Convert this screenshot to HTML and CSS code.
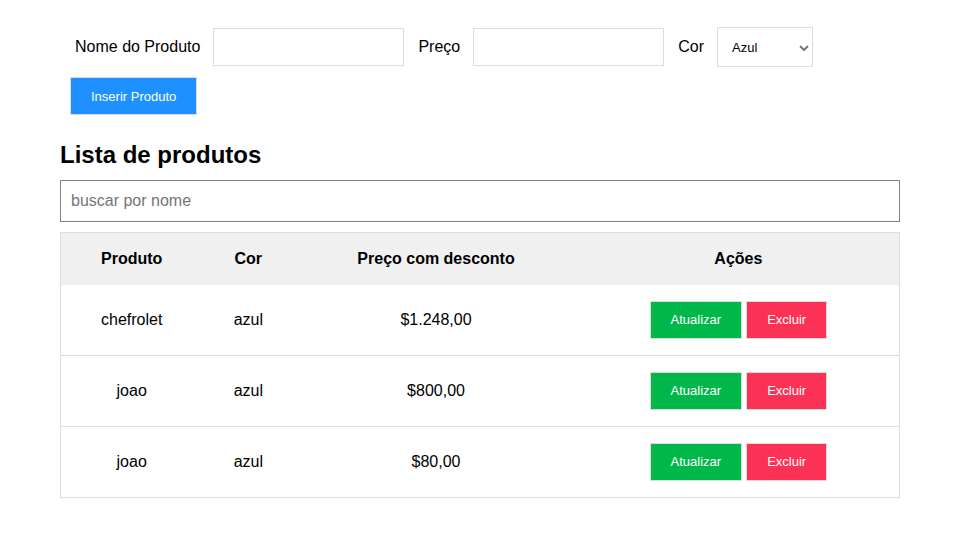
FILE: index.html
```html
<!DOCTYPE html>
<html lang="pt-BR">
<head>
<meta charset="utf-8">
<title>Lista de produtos</title>
<link rel="stylesheet" href="styles.css">
</head>
<body>
<main class="container">
  <form class="product-form">
    <label for="nome">Nome do Produto</label>
    <input id="nome" type="text">
    <label for="preco">Preço</label>
    <input id="preco" type="text">
    <label for="cor">Cor</label>
    <span class="select-wrap">
      <select id="cor"><option>Azul</option><option>Vermelho</option><option>Amarelo</option></select>
      <svg class="chevron" viewBox="0 0 10 6" aria-hidden="true"><path d="M1 1l4 4 4-4"/></svg>
    </span>
    <button class="btn btn-insert" type="button">Inserir Produto</button>
  </form>
  <h2>Lista de produtos</h2>
  <input class="search" type="text" placeholder="buscar por nome" aria-label="buscar por nome">
  <table>
    <colgroup><col class="col-product"><col class="col-color"><col class="col-price"><col class="col-actions"></colgroup>
    <thead>
      <tr><th>Produto</th><th>Cor</th><th>Preço com desconto</th><th>Ações</th></tr>
    </thead>
    <tbody>
      <tr><td>chefrolet</td><td>azul</td><td>$1.248,00</td><td><div class="actions"><button class="btn btn-update" type="button">Atualizar</button><button class="btn btn-delete" type="button">Excluir</button></div></td></tr>
      <tr><td>joao</td><td>azul</td><td>$800,00</td><td><div class="actions"><button class="btn btn-update" type="button">Atualizar</button><button class="btn btn-delete" type="button">Excluir</button></div></td></tr>
      <tr><td>joao</td><td>azul</td><td>$80,00</td><td><div class="actions"><button class="btn btn-update" type="button">Atualizar</button><button class="btn btn-delete" type="button">Excluir</button></div></td></tr>
    </tbody>
  </table>
</main>
</body>
</html>
```
FILE: styles.css
```css
* { box-sizing: border-box; }
body {
  margin: 0;
  background: #fff;
  color: #000;
  font: 16px "Liberation Sans", Arial, sans-serif;
}
.container {
  max-width: 960px;
  padding: 22px 60px;
}
.product-form {
  display: flex;
  flex-wrap: wrap;
  align-items: center;
  padding: 0 10px;
}
.product-form label { margin: 0 8px 0 5px; }
.product-form input {
  width: 191px;
  height: 38px;
  margin: 5px 9px 5px 5px;
  padding: 10px;
  border: 1px solid #ddd;
}
.select-wrap {
  position: relative;
  margin: 5px;
}
select {
  display: block;
  width: 96px;
  height: 40px;
  padding: 0 14px;
  border: 1px solid #ddd;
  border-radius: 0;
  background: #fff;
  color: #000;
  font: 13px "Liberation Sans", Arial, sans-serif;
  appearance: none;
}
.chevron {
  position: absolute;
  top: 18px;
  right: 4px;
  width: 10px;
  height: 6px;
  fill: none;
  stroke: #777;
  stroke-width: 2;
  pointer-events: none;
}
.btn {
  height: 38px;
  padding: 0 20px;
  border: 1px solid #ddd;
  color: #fff;
  font: 13px "Liberation Sans", Arial, sans-serif;
}
.btn-insert { margin: 5px 0; background: #1e90ff; }
.btn-update { background: #00b84a; }
.btn-delete { background: #fc3156; }
h2 {
  margin: 21px 0 11px;
  font-size: 24px;
  line-height: 28px;
}
.search {
  display: block;
  width: 100%;
  height: 42px;
  padding: 10px;
  border: 1px solid #808080;
  font: inherit;
}
.search::placeholder { color: #757575; }
table {
  width: 100%;
  margin-top: 10px;
  border: 1px solid #ddd;
  border-collapse: collapse;
  text-align: center;
}
.col-product { width: 142px; }
.col-color { width: 92px; }
.col-price { width: 284px; }
.col-actions { width: 322px; }
th {
  height: 52px;
  padding: 16px;
  background: #f0f0f0;
}
td { padding: 16px; }
tbody tr + tr td { border-top: 1px solid #ddd; }
.actions {
  display: flex;
  justify-content: center;
  gap: 4px;
}
```
